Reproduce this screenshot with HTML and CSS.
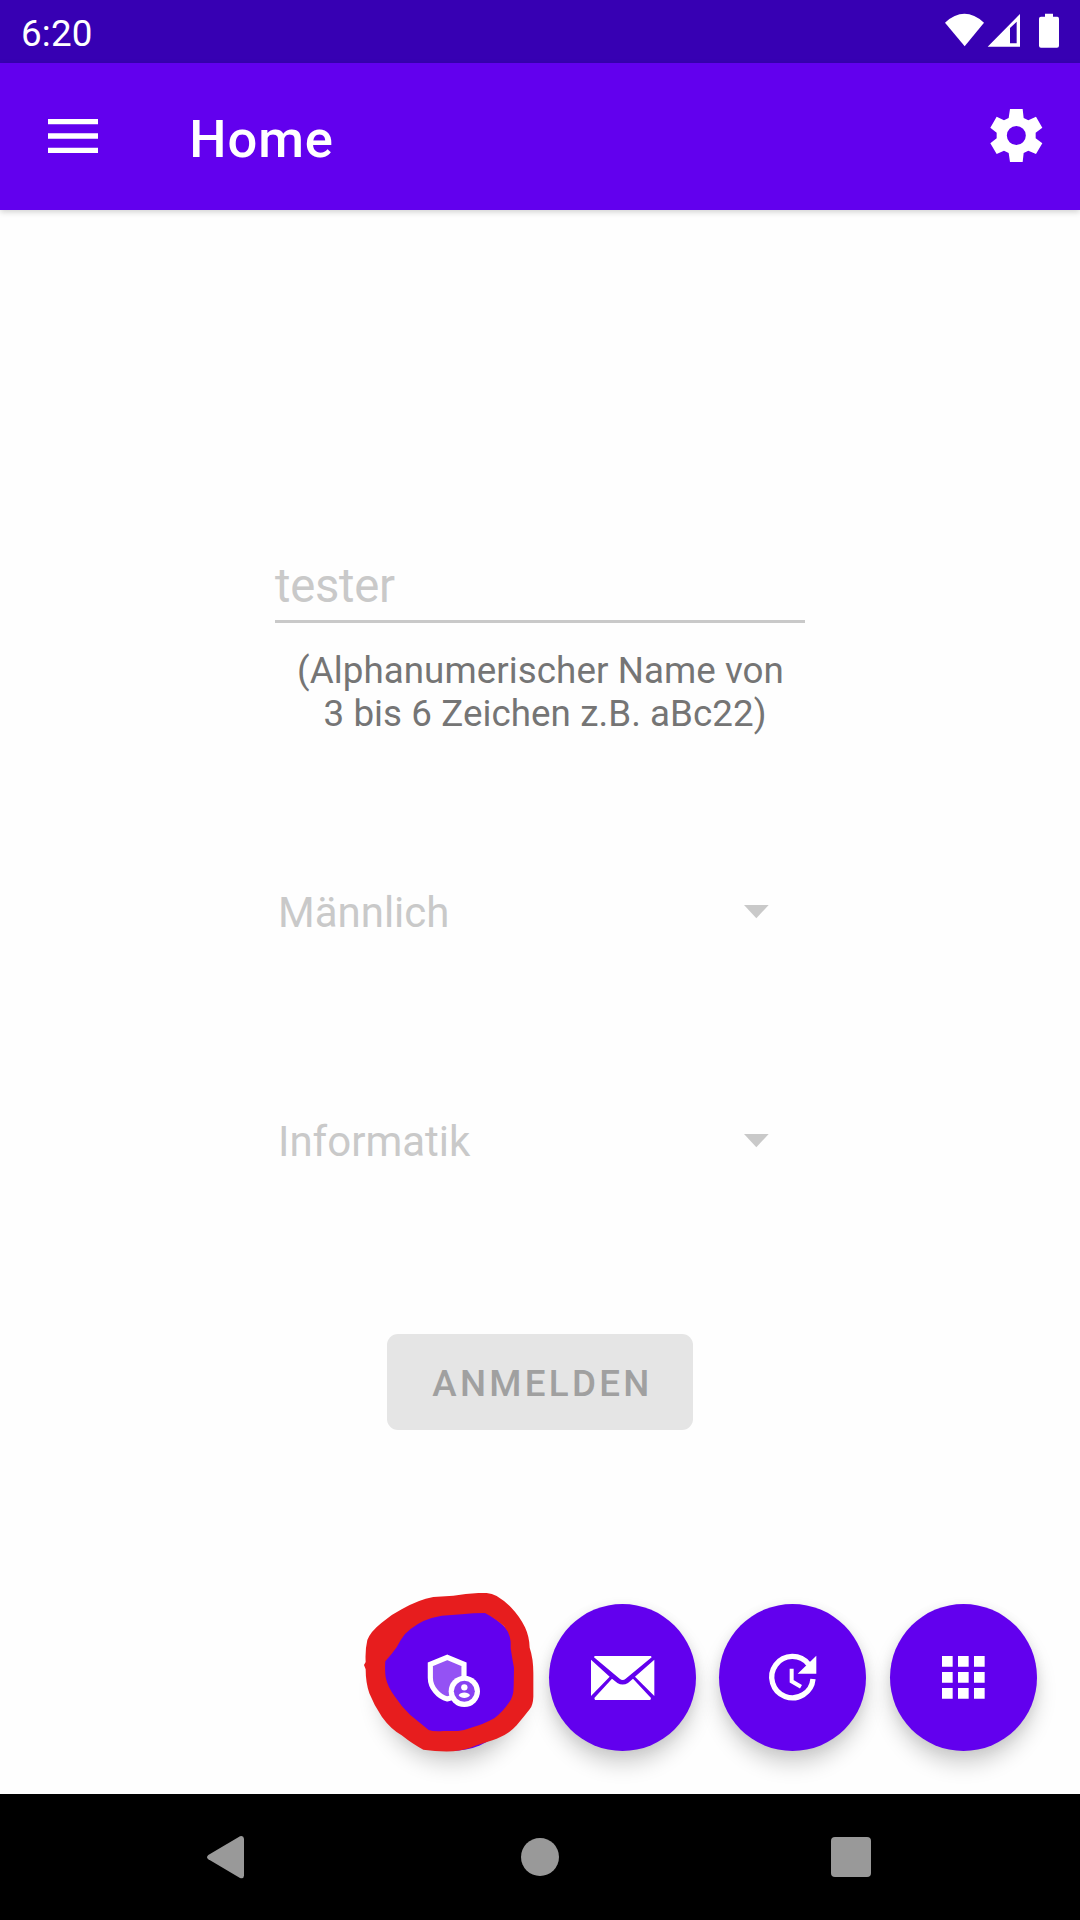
FILE: index.html
```html
<!DOCTYPE html>
<html lang="de">
<head>
<meta charset="utf-8">
<title>Home</title>
<link rel="stylesheet" href="styles.css">
</head>
<body>
<div class="screen">
  <div class="status-bar">
    <span class="time">6:20</span>
    <svg class="status-icons" viewBox="72 40 348 106" fill="#fff">
      <path d="M75 69Q133 16 192 69L134 140Z"/>
      <path fill-rule="evenodd" d="M203 141L300 43V141ZM270 85V131H290V66Z"/>
      <path d="M375 42H399V51H412Q417 51 417 57V138Q417 144 411 144H363Q357 144 357 138V57Q357 51 363 51H375Z"/>
    </svg>
  </div>
  <header class="app-bar">
    <svg class="menu-icon" viewBox="0 0 150 102" fill="#fff"><path d="M0 0H150V16H0ZM0 43H150V59H0ZM0 86H150V102H0Z"/></svg>
    <h1 class="title">Home</h1>
    <svg class="gear-icon" viewBox="211 327 157 159" fill="#fff"><path fill-rule="evenodd" d="M271 327H309L312 354L326 361L349 350L368 383L348 398V415L368 430L349 462L326 452L312 459L309 486H271L267 459L253 452L231 462L212 430L231 415V398L212 383L231 350L253 361L267 354ZM290 378A28.500 28.500 0 1 0 290 435A28.500 28.500 0 1 0 290 378Z"/></svg>
  </header>
  <main class="content">
    <div class="name-field">tester</div>
    <p class="hint">(Alphanumerischer Name von<br>&nbsp;3 bis 6 Zeichen z.B. aBc22)</p>
    <div class="spinner gender"><span>Männlich</span><svg class="arrow" viewBox="0 0 74 40"><path d="M0 0H74L37 40Z" fill="#c9c9c9"/></svg></div>
    <div class="spinner subject"><span>Informatik</span><svg class="arrow" viewBox="0 0 74 40"><path d="M0 0H74L37 40Z" fill="#c9c9c9"/></svg></div>
    <div class="login">ANMELDEN</div>
    <div class="fabs">
      <div class="fab">
        <svg class="icon-admin" viewBox="232 220 162 160">
          <path d="M293 230L343 251V291C343 320 318 351 293 355C266 349 242 320 242 291V251Z" fill="#9452f4" stroke="#fff" stroke-width="15.500"/>
          <circle cx="344" cy="332" r="47" fill="#fff"/>
          <circle cx="344" cy="332" r="31.500" fill="#8741f3"/>
          <circle cx="344" cy="320" r="9.500" fill="#fff"/>
          <path d="M327 344C332 333 356 333 361 344C354 355 334 355 327 344Z" fill="#fff"/>
        </svg>
        <svg class="marker" viewBox="0 0 600 570"><path fill="#e71d1e" fill-rule="evenodd" d="M385 39H410Q426 40 440 48Q465 63 484 83Q510 110 525 142Q538 170 539 203Q550 235 550 280V350Q549 376 539 388Q521 411 500 436Q477 462 440 476Q416 484 380 496Q346 511 310 514Q265 516 220 509Q190 494 155 466Q122 447 96 411Q72 376 58 340Q47 308 47 268L42 255L47 246Q45 210 52 180Q61 155 95 128Q125 103 155 88Q205 59 250 51L310 47Q347 41 385 39ZM405 99Q369 99 335 103L275 107L245 114Q201 127 165 162Q150 181 140 202Q126 222 106 244Q104 268 107 292Q113 322 135 350Q153 378 180 404L236 450Q250 455 280 453L324 453Q347 450 370 441Q398 434 433 415Q460 393 476 369Q491 350 491 320L492 263Q487 239 482 205V185Q479 158 462 139Q440 118 405 99Z"/></svg>
      </div>
      <div class="fab">
        <svg class="icon-mail" viewBox="152 198 190 132" fill="#fff"><path d="M163 198H332L334 202L256 266Q247 274 238 266L161 202ZM152 209L208 260L152 318ZM342 209V318L284 260ZM215 266L231 279Q247 288 263 279L278 266L332 324L330 330H164L162 324Z"/></svg>
      </div>
      <div class="fab">
        <svg class="icon-update" viewBox="205 190 146 144"><path d="M327 218A62 62 0 1 0 340 262" fill="none" stroke="#fff" stroke-width="16"/><path d="M350 192V246H294Z" fill="#fff"/><path d="M276 231V269L304 285" fill="none" stroke="#fff" stroke-width="12"/></svg>
      </div>
      <div class="fab">
        <svg class="icon-apps" viewBox="0 0 128 128" fill="#fff"><path d="M0 0H32V32H0ZM48 0H80V32H48ZM96 0H128V32H96ZM0 48H32V80H0ZM48 48H80V80H48ZM96 48H128V80H96ZM0 96H32V128H0ZM48 96H80V128H48ZM96 96H128V128H96Z"/></svg>
      </div>
    </div>
  </main>
  <nav class="nav-bar">
    <svg class="nav-back" viewBox="0 0 111 128"><path fill="#999" d="M99 1Q110 -2 111 8V119Q110 130 99 126L4 70Q-4 64 4 57Z"/></svg>
    <span class="nav-home"></span>
    <span class="nav-recent"></span>
  </nav>
</div>
</body>
</html>
```
FILE: styles.css
```css
* { box-sizing: border-box; }
body { margin: 0; font-family: Roboto, sans-serif; background: #fefefe; }
svg { display: block; flex: none; overflow: visible; }
.screen { width: 1080px; height: 1920px; display: flex; flex-direction: column; overflow: hidden; }

.status-bar {
  height: 63px; flex: none; background: #3700b3; color: #fff;
  display: flex; justify-content: space-between; align-items: flex-start;
  padding: 0 20px 0 21px;
}
.time { font-size: 36.75px; line-height: 43px; padding-top: 12px; letter-spacing: .2px; }
.status-icons { width: 116px; height: 35.33px; margin-top: 13.33px; }

.app-bar {
  height: 147px; flex: none; background: #6200ee; color: #fff;
  display: flex; align-items: flex-start; padding: 0 37.6px 0 48.3px;
  box-shadow: 0 2px 6px rgba(0, 0, 0, .18); z-index: 1;
}
.menu-icon { width: 50px; height: 34px; margin-top: 56px; }
.title {
  margin: 45px auto 0 91px; font-size: 52.5px; line-height: 62px;
  font-weight: 500; letter-spacing: .9px;
}
.gear-icon { width: 52.33px; height: 53px; margin-top: 46px; }

.content {
  flex: 1; display: flex; flex-direction: column; align-items: center;
  padding-top: 340px;
}
.name-field {
  width: 530px; height: 73px; border-bottom: 3px solid #c9c9c9;
  font-size: 47.25px; line-height: 72px; letter-spacing: -.3px; color: #c9c9c9;
}
.hint {
  margin: 26px 0 0; padding-left: 1px; font-size: 36.75px; line-height: 43px;
  letter-spacing: .06px; color: #757575; text-align: center; white-space: nowrap;
}
.spinner {
  width: 530px; height: 60px; padding: 0 36px 0 3px;
  display: flex; justify-content: space-between; align-items: center;
  font-size: 42px; line-height: 60px; color: #c9c9c9;
}
.arrow { width: 24.67px; height: 13.33px; margin-top: -2px; }
.gender { margin-top: 148px; }
.subject { margin-top: 169px; }
.login {
  width: 306px; height: 96px; margin-top: 162px; border-radius: 11px;
  background: #e5e5e5; color: #a0a0a0; text-align: center; padding-left: 5px;
  font-size: 36.75px; line-height: 99px; font-weight: 500; letter-spacing: 3.28px;
}
.fabs { align-self: stretch; margin-top: 174px; padding-right: 43px; display: flex; justify-content: flex-end; gap: 23.6px; }
.fab {
  position: relative; width: 147px; height: 147px; border-radius: 50%; background: #6200ee;
  display: flex; align-items: center; justify-content: center;
  box-shadow: 0 14px 20px rgba(0, 0, 0, .17), 0 2px 12px rgba(0, 0, 0, .08);
}
.icon-admin { width: 54px; height: 53.33px; margin: 6px 0 0 4px; }
.icon-mail { width: 63.33px; height: 44px; }
.icon-update { width: 48.67px; height: 48px; margin: 2px 2px 0 0; }
.icon-apps { width: 42.67px; height: 42.67px; }
.marker { position: absolute; left: -28.2px; top: -24px; width: 200px; height: 190px; }

.nav-bar { height: 126px; flex: none; background: #000; display: flex; align-items: center; padding-left: 207px; }
.nav-back { width: 37px; height: 42.67px; }
.nav-home { width: 38px; height: 38px; border-radius: 50%; background: #999; margin-left: 277px; }
.nav-recent { width: 40px; height: 40px; border-radius: 4px; background: #999; margin-left: 272px; }
```
